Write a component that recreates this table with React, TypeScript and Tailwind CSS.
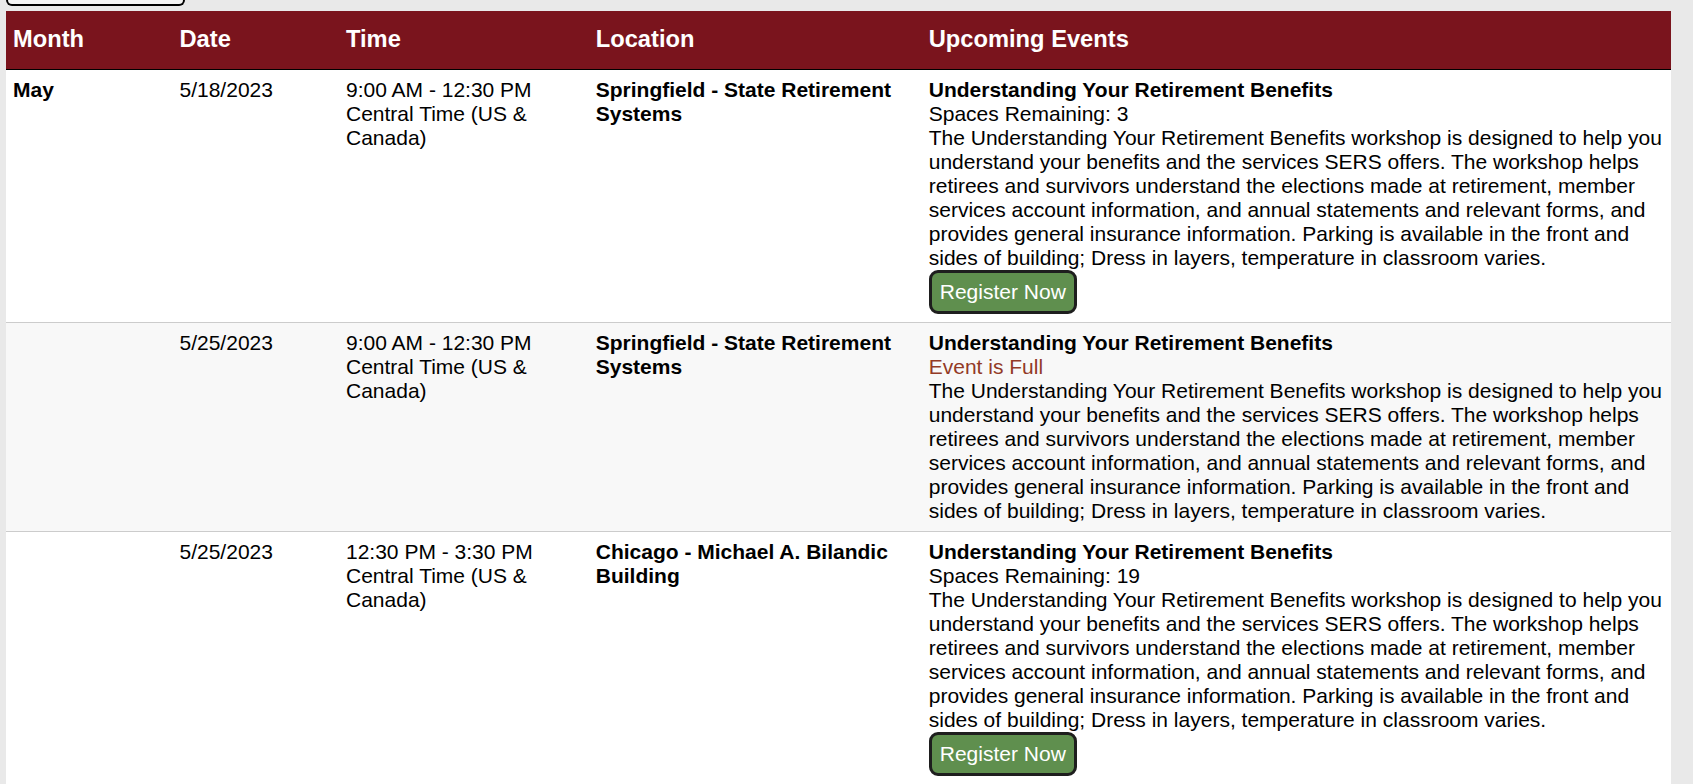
import React from 'react';

interface EventRow {
    month: string;
    date: string;
    time: string;
    location: string;
    title: string;
    spaces: number | null;
}

const description = 'The Understanding Your Retirement Benefits workshop is designed to help you understand your benefits and the services SERS offers. The workshop helps retirees and survivors understand the elections made at retirement, member services account information, and annual statements and relevant forms, and provides general insurance information. Parking is available in the front and sides of building; Dress in layers, temperature in classroom varies.';

const events: EventRow[] = [
    { month: 'May', date: '5/18/2023', time: '9:00 AM - 12:30 PM', location: 'Springfield - State Retirement Systems', title: 'Understanding Your Retirement Benefits', spaces: 3 },
    { month: '', date: '5/25/2023', time: '9:00 AM - 12:30 PM', location: 'Springfield - State Retirement Systems', title: 'Understanding Your Retirement Benefits', spaces: null },
    { month: '', date: '5/25/2023', time: '12:30 PM - 3:30 PM', location: 'Chicago - Michael A. Bilandic Building', title: 'Understanding Your Retirement Benefits', spaces: 19 },
];

export default function App() {
    return (
        <div className="min-h-screen bg-[#e9e9e9] pl-[6px] pr-[22px] font-['Liberation_Sans',Arial,sans-serif] text-[21px] leading-[24px] text-black">
            <div className="h-[6px] w-[179px] rounded-b-[10px] border-2 border-t-0 border-black bg-[#f4f4f4]" />
            <table className="mt-[5px] w-full table-fixed border-collapse bg-white text-left">
                <colgroup>
                    <col className="w-[10%]" />
                    <col className="w-[10%]" />
                    <col className="w-[15%]" />
                    <col className="w-[20%]" />
                    <col className="w-[45%]" />
                </colgroup>
                <thead>
                    <tr className="h-[58px] border-b border-black bg-[#7a141d] text-[23.7px] leading-[27px] text-white">
                        <th className="px-[7px] font-bold">Month</th>
                        <th className="px-[7px] font-bold">Date</th>
                        <th className="px-[7px] font-bold">Time</th>
                        <th className="px-[7px] font-bold">Location</th>
                        <th className="px-[7px] font-bold">Upcoming Events</th>
                    </tr>
                </thead>
                <tbody>
                    {events.map((ev, i) => (
                        <tr key={i} className={`border-b border-[#cccccc] align-top ${i % 2 === 1 ? 'bg-[#f8f8f8]' : 'bg-white'}`}>
                            <td className="px-[7px] py-[8px] font-bold">{ev.month}</td>
                            <td className="px-[7px] py-[8px]">{ev.date}</td>
                            <td className="px-[7px] py-[8px]">{ev.time}<br />Central Time (US &amp; Canada)</td>
                            <td className="px-[7px] py-[8px] font-bold">{ev.location}</td>
                            <td className="px-[7px] py-[8px]">
                                <div className="font-bold">{ev.title}</div>
                                {ev.spaces !== null
                                    ? <div>Spaces Remaining: {ev.spaces}</div>
                                    : <div className="text-[#933a26]">Event is Full</div>}
                                <div>{description}</div>
                                {ev.spaces !== null && (
                                    <button className="block h-[44px] rounded-[9px] border-[3px] border-[#1e1e1e] bg-[#5f8f4e] px-[8px] text-[21px] leading-[24px] text-white">
                                        Register Now
                                    </button>
                                )}
                            </td>
                        </tr>
                    ))}
                </tbody>
            </table>
        </div>
    );
}
